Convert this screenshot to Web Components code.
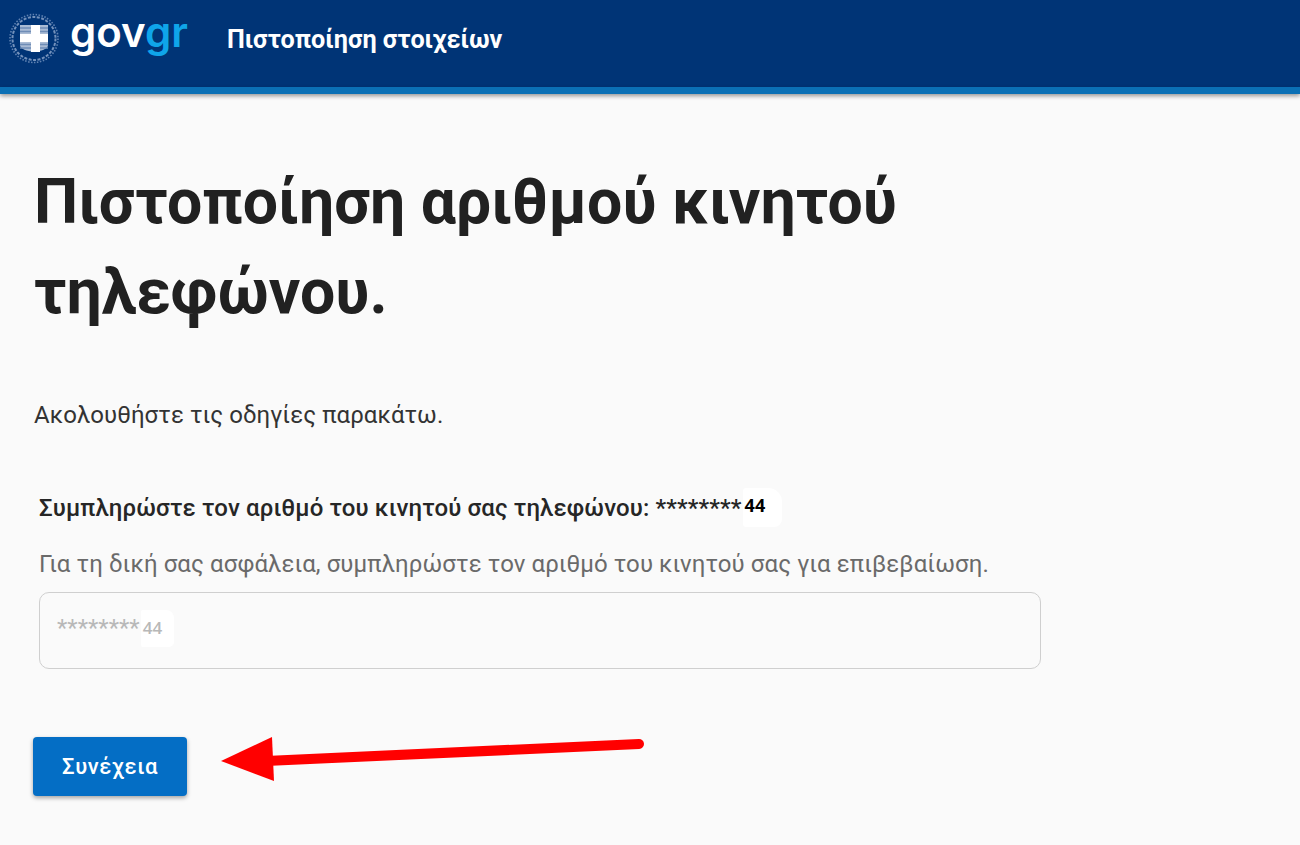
<!DOCTYPE html>
<html lang="el">
<head>
<meta charset="utf-8">
<title>Πιστοποίηση στοιχείων</title>
<style>
    html, body { margin: 0; padding: 0; background: #fafafa; }
    body { font-family: Roboto, "Noto Sans", sans-serif; height: 845px; overflow: hidden; position: relative; }
</style>
</head>
<body>
<gov-header title-text="Πιστοποίηση στοιχείων"></gov-header>
<gov-main>
    <gov-phone-form slot="form" masked="********" suffix="44"></gov-phone-form>
</gov-main>
<red-arrow></red-arrow>
<script>
function mkTmplt(innerHtml) {
    var tmplt = document.createElement("template");
    tmplt.innerHTML = innerHtml;
    return tmplt;
}

class GovHeader extends HTMLElement {
    constructor() {
        super();
        const shadow = this.attachShadow({ mode: "open" });
        shadow.append(GovHeader._tmplt.content.cloneNode(true));
        shadow.querySelector("#title").textContent = this.getAttribute("title-text");
    }
}
GovHeader._tmplt = mkTmplt(`
    <style>
        :host { display: block; }
        .bar {
            height: 87px;
            background: #003476;
            display: flex;
            align-items: flex-start;
            color: #fff;
        }
        .emblem { width: 52px; height: 52px; margin: 13px 0 0 8px; flex: none; }
        .logo {
            font-family: Inter, Lato, sans-serif;
            font-weight: 600;
            font-size: 42px;
            line-height: 42px;
            margin: 11px 0 0 10px;
            width: 157px;
            flex: none;
        }
        .logo span { color: #0fa5e9; }
        #title {
            font-size: 25.2px;
            font-weight: 700;
            line-height: 30px;
            margin-top: 25px;
        }
        .stripe {
            height: 7px;
            background: #0b70b5;
            box-shadow: 0 2px 4px rgba(0,0,0,.4);
        }
    </style>
    <div class="bar">
        <svg class="emblem" viewBox="0 0 52 52" fill="none">
            <circle cx="26" cy="25.500" r="24" stroke="#5f82b2" stroke-width="1.600" stroke-dasharray="1.500 1.500"/>
            <circle cx="26" cy="25.500" r="21.500" stroke="#7391bb" stroke-width="2" stroke-dasharray="3 1.500"/>
            <path d="M12 12h28v20c0 4-7 6-14 7-7-1-14-3-14-7z" fill="#a9bbd4"/>
            <path d="M12 15h28M12 18.500h28M12 31.500h28M12 35h28" stroke="#6f8db6" stroke-width="1.400"/>
            <path d="M23 12h9v9h8v8h-8v10h-9v-10h-11v-8h11z" fill="#fff"/>
        </svg>
        <div class="logo">gov<span>gr</span></div>
        <div id="title"></div>
    </div>
    <div class="stripe"></div>
`);

class GovMain extends HTMLElement {
    constructor() {
        super();
        const shadow = this.attachShadow({ mode: "open" });
        shadow.append(GovMain._tmplt.content.cloneNode(true));
    }
}
GovMain._tmplt = mkTmplt(`
    <style>
        :host { display: block; padding: 63px 0 0 34px; color: #212121; }
        h1 {
            margin: 0;
            width: 1000px;
            font-size: 62.500px;
            line-height: 90px;
            font-weight: 700;
        }
        p {
            margin: 63px 0 0;
            font-size: 24px;
            line-height: 30px;
            letter-spacing: .06px;
            color: #333;
        }
    </style>
    <h1>Πιστοποίηση αριθμού κινητού τηλεφώνου.</h1>
    <p>Ακολουθήστε τις οδηγίες παρακάτω.</p>
    <slot name="form"></slot>
`);

class GovPhoneForm extends HTMLElement {
    constructor() {
        super();
        const shadow = this.attachShadow({ mode: "open" });
        shadow.append(GovPhoneForm._tmplt.content.cloneNode(true));
        let masked = this.getAttribute("masked");
        let suffix = this.getAttribute("suffix");
        shadow.querySelectorAll(".masked").forEach(e => e.textContent = masked);
        shadow.querySelectorAll(".suffix").forEach(e => e.textContent = suffix);
    }
}
GovPhoneForm._tmplt = mkTmplt(`
    <style>
        :host { display: block; }
        .field { margin: 63px 0 0 5px; width: 1002px; }
        .label {
            position: relative;
            z-index: 0;
            font-size: 24px;
            font-weight: 500;
            line-height: 30px;
            letter-spacing: .12px;
            color: #262626;
            white-space: nowrap;
        }
        .hint {
            margin-top: 25px;
            font-size: 24px;
            line-height: 30px;
            letter-spacing: .09px;
            color: #6a6a6a;
            white-space: nowrap;
        }
        .input {
            position: relative;
            z-index: 0;
            box-sizing: border-box;
            margin-top: 13px;
            height: 77px;
            border: 1px solid #cfcfcf;
            border-radius: 10px;
            padding: 20px 0 0 17px;
            font-size: 24px;
            line-height: 30px;
            color: #b8b8b8;
            display: flex;
            align-items: flex-start;
        }
        .suffix {
            position: relative;
            margin-left: 3px;
            font-family: "Open Sans", sans-serif;
            font-weight: 600;
            font-size: 17px;
        }
        .suffix::before {
            content: "";
            position: absolute;
            z-index: -1;
            background: #fff;
        }
        .label .suffix { color: #000; font-weight: 700; font-size: 18px; top: -4px; }
        .label .suffix::before {
            left: -2px; right: -17px; top: -5px; bottom: -10px;
            border-radius: 3px 14px 8px 3px;
        }
        .input .suffix::before {
            left: -2px; right: -12px; top: -3px; bottom: -4px;
            border-radius: 2px 8px 5px 2px;
        }
        .btn {
            display: flex;
            align-items: center;
            justify-content: center;
            margin: 68px 0 0 -6px;
            width: 154px;
            height: 59px;
            background: #046ec5;
            color: #fff;
            border: 0;
            border-radius: 4px;
            font: 500 22px/30px Roboto, sans-serif;
            letter-spacing: .6px;
            box-shadow: 0 2px 4px rgba(0,0,0,.35);
            padding: 0;
        }
    </style>
    <div class="field">
        <div class="label">Συμπληρώστε τον αριθμό του κινητού σας τηλεφώνου: <span class="masked"></span><span class="suffix"></span></div>
        <div class="hint">Για τη δική σας ασφάλεια, συμπληρώστε τον αριθμό του κινητού σας για επιβεβαίωση.</div>
        <div class="input"><span class="masked"></span><span class="suffix"></span></div>
        <button class="btn">Συνέχεια</button>
    </div>
`);

class RedArrow extends HTMLElement {
    constructor() {
        super();
        const shadow = this.attachShadow({ mode: "open" });
        shadow.append(RedArrow._tmplt.content.cloneNode(true));
    }
}
RedArrow._tmplt = mkTmplt(`
    <style>
        :host { position: absolute; left: 220px; top: 735px; width: 430px; height: 50px; display: block; }
    </style>
    <svg width="430" height="50" viewBox="0 0 430 50">
        <path d="M46 26L419 9" stroke="#f00" stroke-width="10" stroke-linecap="round" fill="none"/>
        <path d="M1 26L52 2L54 46z" fill="#f00"/>
    </svg>
`);

customElements.define("gov-header", GovHeader);
customElements.define("gov-main", GovMain);
customElements.define("gov-phone-form", GovPhoneForm);
customElements.define("red-arrow", RedArrow);
</script>
</body>
</html>
